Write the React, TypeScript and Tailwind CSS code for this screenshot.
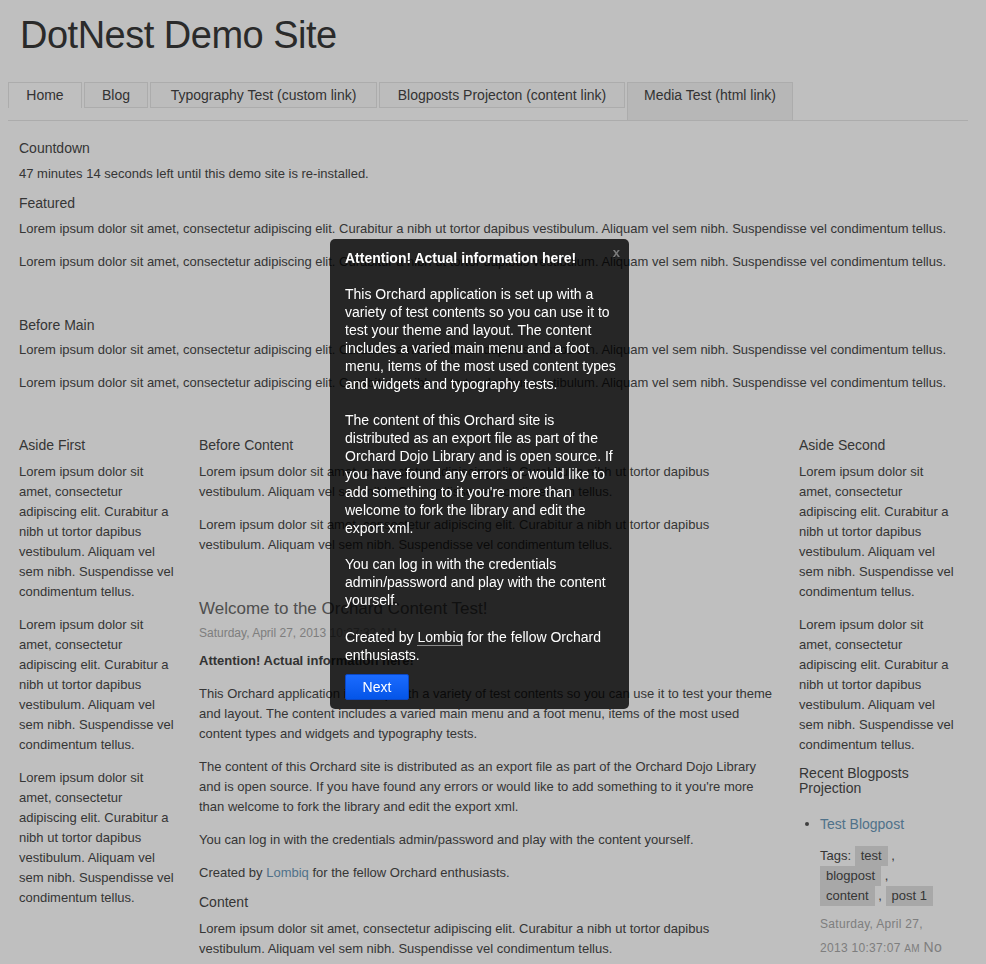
import React from "react";

const LOREM =
  "Lorem ipsum dolor sit amet, consectetur adipiscing elit. Curabitur a nibh ut tortor dapibus vestibulum. Aliquam vel sem nibh. Suspendisse vel condimentum tellus.";

const tabs = [
  { label: "Home", w: "w-[74px]", kind: "current" },
  { label: "Blog", w: "w-[64px]", kind: "normal" },
  { label: "Typography Test (custom link)", w: "w-[227px]", kind: "normal" },
  { label: "Blogposts Projecton (content link)", w: "w-[246px]", kind: "normal" },
  { label: "Media Test (html link)", w: "w-[166px]", kind: "hover" },
];

function Tab({ label, w, kind }: { label: string; w: string; kind: string }) {
  if (kind === "current") {
    return (
      <div className={`${w} h-[26px] border-x border-t border-[#e6e6e6] bg-white text-center leading-[25px]`}>
        {label}
      </div>
    );
  }
  if (kind === "hover") {
    return (
      <div className={`${w} h-[38px] border-x border-t border-[#e6e6e6] bg-[#f5f5f5] text-center leading-[25px]`}>
        {label}
      </div>
    );
  }
  return (
    <div className={`${w} h-[26px] border border-[#e6e6e6] bg-[#fbfbfb] pt-[1px] text-center leading-[23px]`}>
      {label}
    </div>
  );
}

function Heading({ children, className = "" }: { children: React.ReactNode; className?: string }) {
  return <h3 className={`text-[14px] leading-[18px] ${className}`}>{children}</h3>;
}

function Tag({ children }: { children: React.ReactNode }) {
  return <span className="inline-block bg-[#e1e1e1] px-[6px] leading-[20px]">{children}</span>;
}

function Tour() {
  return (
    <div className="absolute left-[330px] top-[239px] z-20 w-[299px] rounded-[5px] bg-black/80 pb-[9px] pl-[15px] pr-[10px] pt-[10px] font-['Liberation_Sans',Arial,sans-serif] text-[14px] leading-[18px] text-white">
      <span className="absolute right-[9px] top-[7px] text-[13px] font-bold leading-[13px] text-[#7a7a7a]">x</span>
      <p className="font-bold">Attention! Actual information here!</p>
      <p className="mt-[18px]">
        This Orchard application is set up with a variety of test contents so you can use it to test your theme and
        layout. The content includes a varied main menu and a foot menu, items of the most used content types and
        widgets and typography tests.
      </p>
      <p className="mt-[18px]">
        The content of this Orchard site is distributed as an export file as part of the Orchard Dojo Library and is
        open source. If you have found any errors or would like to add something to it you're more than welcome to
        fork the library and edit the export xml.
      </p>
      <p className="mt-[18px]">You can log in with the credentials admin/password and play with the content yourself.</p>
      <p className="mt-[19px]">
        Created by <span className="border-b border-[#8a8a8a]">Lombiq</span> for the fellow Orchard enthusiasts.
      </p>
      <button className="mt-[10px] block h-[26px] w-[64px] rounded-[2px] border border-[#0a47c4] bg-gradient-to-b from-[#1a6bff] to-[#0455e8] text-[14px] leading-[24px] text-white">
        Next
      </button>
    </div>
  );
}

export default function App() {
  return (
    <div className="relative min-h-screen bg-white font-['Liberation_Sans',Arial,sans-serif] text-[13px] text-[#484848]">
      <div className="ml-[8px] w-[960px] pb-[10px]">
        <h1 className="pl-[12px] pt-[13px] text-[38px] leading-[45px] tracking-[-0.5px] text-[#383838]">
          DotNest Demo Site
        </h1>

        <nav className="mt-[24px] flex h-[39px] items-start gap-[2px] border-b border-[#e6e6e6] text-[14px] text-[#444]">
          {tabs.map((t) => (
            <Tab key={t.label} {...t} />
          ))}
        </nav>

        <div className="pl-[11px] leading-[20px]">
          <Heading className="mt-[18px]">Countdown</Heading>
          <p className="mt-[7px]">47 minutes 14 seconds left until this demo site is re-installed.</p>

          <Heading className="mt-[10px]">Featured</Heading>
          <p className="mt-[7px]">{LOREM}</p>
          <p className="mt-[13px]">{LOREM}</p>

          <Heading className="mt-[44px]">Before Main</Heading>
          <p className="mt-[6px]">{LOREM}</p>
          <p className="mt-[13px]">{LOREM}</p>

          <div className="mt-[43px] flex items-start">
            <aside className="w-[160px] shrink-0">
              <Heading>Aside First</Heading>
              <p className="mt-[8px]">{LOREM}</p>
              <p className="mt-[13px]">{LOREM}</p>
              <p className="mt-[13px]">{LOREM}</p>
            </aside>

            <main className="ml-[20px] w-[575px] shrink-0">
              <Heading>Before Content</Heading>
              <p className="mt-[8px]">{LOREM}</p>
              <p className="mt-[13px]">{LOREM}</p>

              <h2 className="mt-[43px] text-[17px] leading-[22px] text-[#6a6a6a]">
                Welcome to the Orchard Content Test!
              </h2>
              <p className="mt-[6px] text-[12px] leading-[14px] text-[#a9a9a9]">Saturday, April 27, 2013 10:27:32 AM</p>
              <p className="mt-[11px] font-bold text-[#444]">Attention! Actual information here!</p>
              <p className="mt-[13px]">
                This Orchard application is set up with a variety of test contents so you can use it to test your
                theme and layout. The content includes a varied main menu and a foot menu, items of the most used
                content types and widgets and typography tests.
              </p>
              <p className="mt-[13px]">
                The content of this Orchard site is distributed as an export file as part of the Orchard Dojo Library
                and is open source. If you have found any errors or would like to add something to it you're more
                than welcome to fork the library and edit the export xml.
              </p>
              <p className="mt-[13px]">
                You can log in with the credentials admin/password and play with the content yourself.
              </p>
              <p className="mt-[13px]">
                Created by <a className="text-[#6b98b8]">Lombiq</a> for the fellow Orchard enthusiasts.
              </p>

              <Heading className="mt-[10px]">Content</Heading>
              <p className="mt-[8px]">{LOREM}</p>
            </main>

            <aside className="ml-[25px] w-[160px] shrink-0">
              <Heading>Aside Second</Heading>
              <p className="mt-[8px]">{LOREM}</p>
              <p className="mt-[13px]">{LOREM}</p>

              <Heading className="mt-[11px] !leading-[15px]">Recent Blogposts Projection</Heading>
              <ul className="mt-[18px] pl-[6px]">
                <li className="flex">
                  <span className="flex h-[20px] w-[15px] shrink-0 items-center">
                    <span className="h-[4px] w-[4px] rounded-full bg-[#555]" />
                  </span>
                  <div>
                    <a className="block text-[14px] leading-[20px] text-[#6b98b8]">Test Blogpost</a>
                    <div className="mt-[12px] leading-[20px]">
                      <div>
                        Tags: <Tag>test</Tag> ,
                      </div>
                      <div>
                        <Tag>blogpost</Tag> ,
                      </div>
                      <div>
                        <Tag>content</Tag> , <Tag>post 1</Tag>
                      </div>
                    </div>
                    <p className="mt-[7px] text-[12px] leading-[23px] tracking-[0.3px] text-[#a9a9a9]">
                      Saturday, April 27,
                      <br />
                      2013 10:37:07 <span className="text-[10px]">AM</span>{" "}
                      <span className="text-[14px]">No</span>
                    </p>
                  </div>
                </li>
              </ul>
            </aside>
          </div>
        </div>
      </div>

      <div className="fixed inset-0 z-10 bg-black/25" />
      <Tour />
    </div>
  );
}
